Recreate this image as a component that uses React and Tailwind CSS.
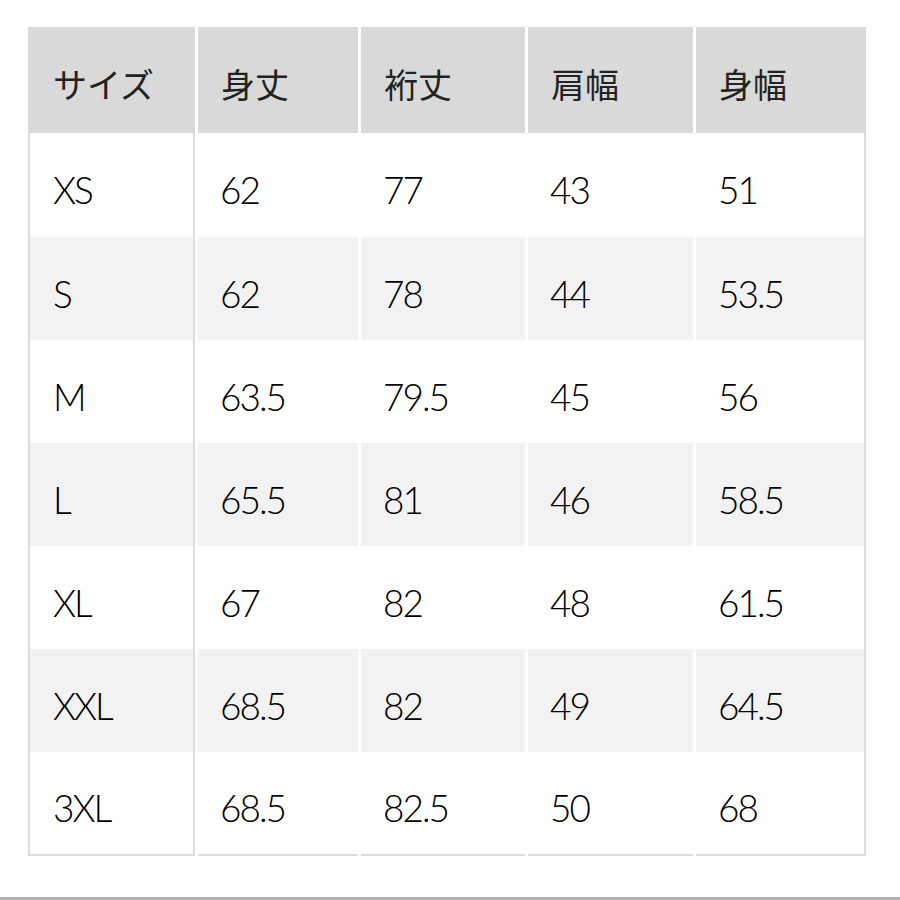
import React from "react";

const headers = ["サイズ", "身丈", "裄丈", "肩幅", "身幅"];
const rows = [
  ["XS", "62", "77", "43", "51"],
  ["S", "62", "78", "44", "53.5"],
  ["M", "63.5", "79.5", "45", "56"],
  ["L", "65.5", "81", "46", "58.5"],
  ["XL", "67", "82", "48", "61.5"],
  ["XXL", "68.5", "82", "49", "64.5"],
  ["3XL", "68.5", "82.5", "50", "68"],
];
const heights = ["h-[104px]", "h-[103px]", "h-[103px]", "h-[103px]", "h-[103px]", "h-[103px]", "h-[104px]"];
const widths = ["w-[167px]", "w-[160px]", "w-[164px]", "w-[165px]", "w-[170px]"];

export default function App() {
  return (
    <div className="w-[900px] h-[900px] bg-white flex flex-col overflow-hidden">
      <div className="pt-[27px] pl-[28px]">
        <div className="flex flex-col w-[838px]">
          <div className="flex gap-[3px] h-[106px]">
            {headers.map((h, i) => (
              <div
                key={i}
                className={`${widths[i]} ${i === 0 ? "pl-[25px]" : "pl-[23px]"} bg-[#d9d9d9] flex items-center pt-[6px] text-[34px] font-normal text-[#222] font-['Noto_Sans_CJK_JP',sans-serif]`}
              >
                {h}
              </div>
            ))}
          </div>
          {rows.map((r, ri) => (
            <div key={ri} className={`flex gap-[3px] ${heights[ri]}`}>
              {r.map((c, ci) => (
                <div
                  key={ci}
                  className={`${widths[ci]} ${ri % 2 === 1 ? "bg-[#f2f2f2]" : "bg-white"} ${ci === 0 ? "border-l-2 border-r-2 pl-[23px]" : "pl-[22px]"} ${ci === 4 ? "border-r-2" : ""} ${ri === rows.length - 1 ? "border-b-2" : ""} border-[#dcdcdc] flex items-center pt-[10px] text-[37px] font-light tracking-[-2px] text-black font-['Lato',sans-serif]`}
                >
                  {c}
                </div>
              ))}
            </div>
          ))}
        </div>
      </div>
      <div className="mt-auto h-[3px] bg-[#b3b3b3]" />
    </div>
  );
}
